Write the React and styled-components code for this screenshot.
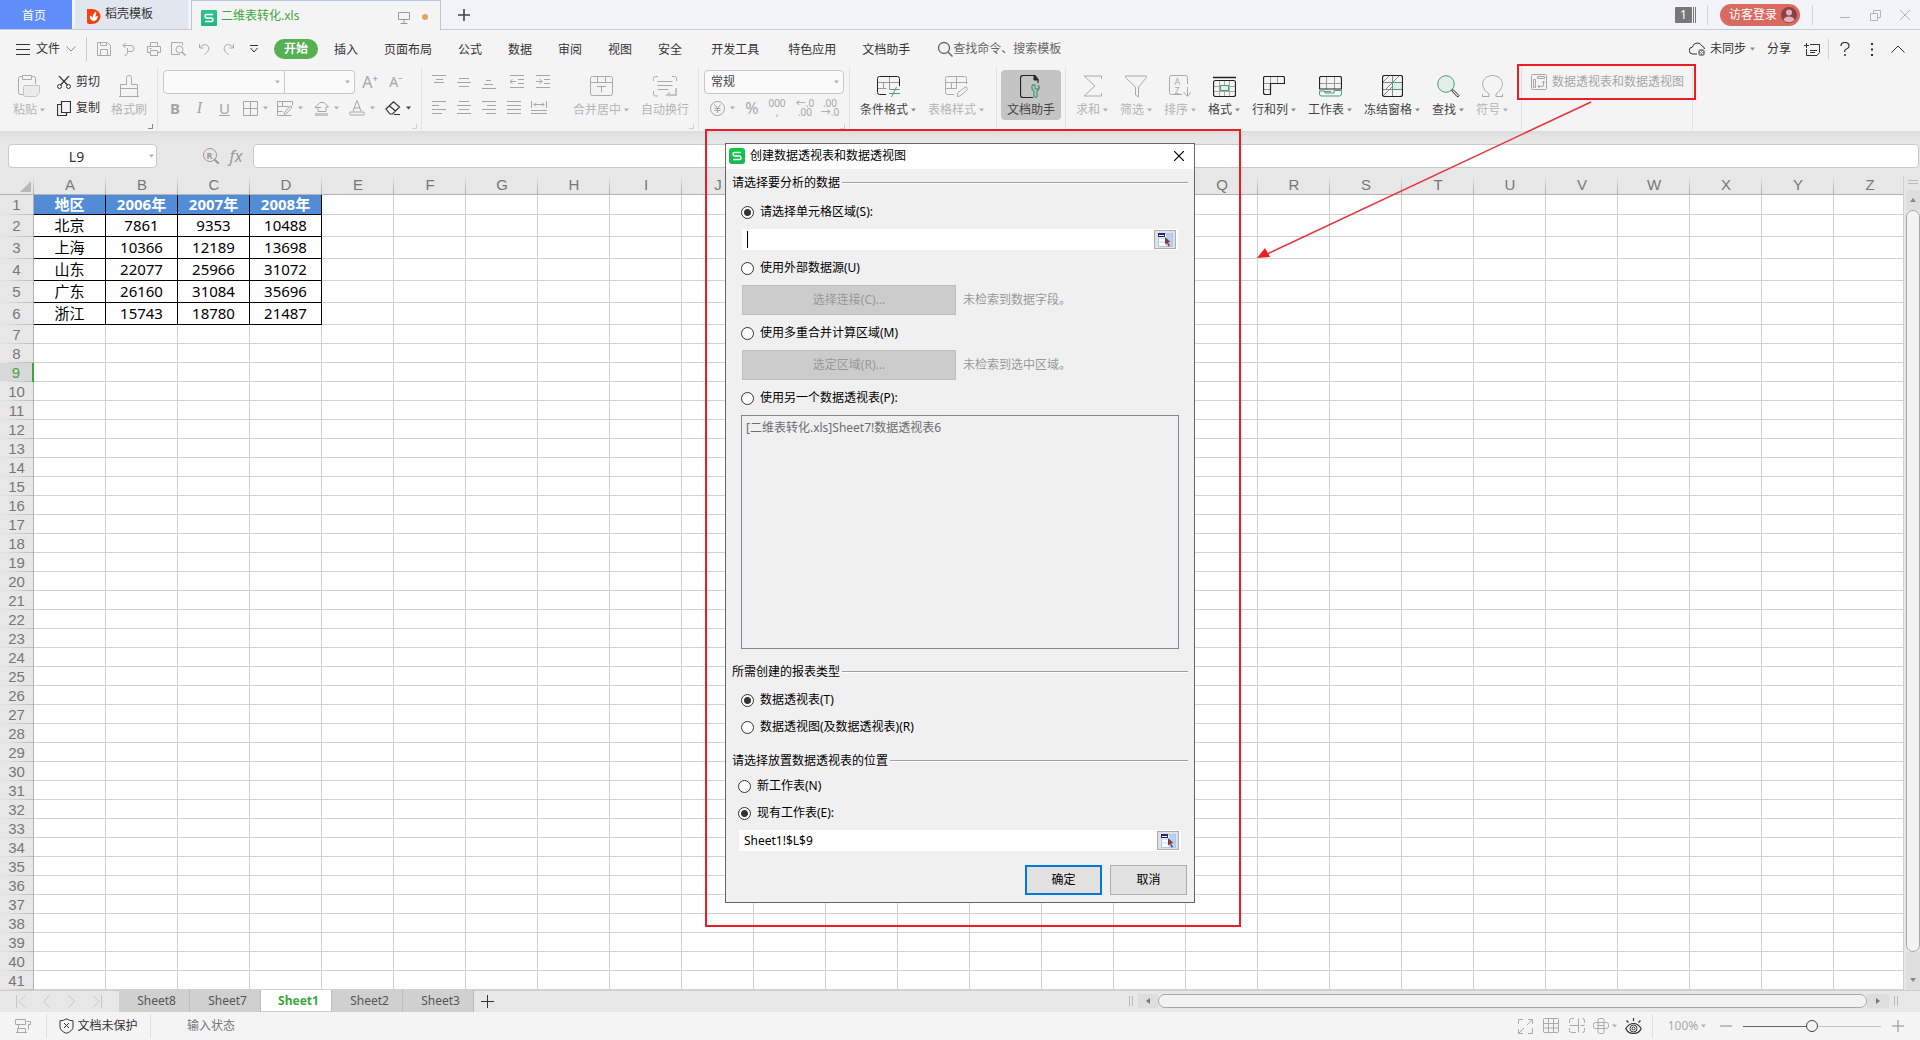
import React, { useState } from "react";
import styled, { createGlobalStyle, css } from "styled-components";

const FONT = `"Noto Sans", "Noto Sans CJK SC", sans-serif`;

const GlobalStyle = createGlobalStyle`
  *, *::after { box-sizing: border-box; }
  body { margin: 0; background: #f4f4f4; }
  button, input, select { font: inherit; color: inherit; margin: 0; }
  button { border: 0; padding: 0; background: none; white-space: nowrap; }
`;

/* ---------- icons ---------- */

const Svg = styled.svg`
  display: block;
  flex: none;
  fill: none;
  stroke: currentColor;
  stroke-width: 1;
`;

const Icon = ({ w = 16, h = w, children, ...rest }) => (
  <Svg width={w} height={h} viewBox={`0 0 ${w} ${h}`} aria-hidden="true" {...rest}>
    {children}
  </Svg>
);

const P = ({ d, ...rest }) => <path d={d} {...rest} />;

const GREEN = "#4f9d74";

const Caret = ({ color = "#aaa" }) => (
  <Icon w={5} h={4}>
    <P d="M0 0.5h5L2.5 3.5z" fill={color} stroke="none" />
  </Icon>
);

const SheetLogo = ({ flat }) => (
  <Icon w={16}>
    <defs>
      <linearGradient id={flat ? "lg1" : "lg2"} x1="0" y1="0" x2="0" y2="1">
        <stop offset="0" stopColor={flat ? "#2fc48f" : "#07cf3c"} />
        <stop offset="1" stopColor={flat ? "#1fb77f" : "#1fb453"} />
      </linearGradient>
    </defs>
    <rect width="16" height="16" rx={flat ? 1 : 3} fill={`url(#${flat ? "lg1" : "lg2"})`} stroke="none" />
    <P d="M12 4.500H5.500Q4 4.500 4 6T5.500 8h5Q12 8 12 9.800T10.500 11.500H4" stroke="#fff" strokeWidth="1.500" />
  </Icon>
);

const ICONS = {
  template: (
    <Icon w={14} h={16}>
      <P d="M0 1h5a8.500 7.500 0 0 1 0 15H2a2 2 0 0 1-2-2z" fill="#f6400d" stroke="none" />
      <P d="M6 13C3 11.500 2.500 9.500 3 7.500c1.500.3 2.500 1.500 2.700 3C5.500 7.500 6.500 5 9 3.500c.5 2 0 4-.8 5.500.8-.9 1.800-1.200 2.600-1C10.800 11 9 13 6 13z" fill="#fff" stroke="none" />
    </Icon>
  ),
  monitor: <Icon w={12} h={12}><P d="M.5.5h11v7H.5zM6 7.500v4M2.500 11.500h7" stroke="#999" /></Icon>,
  burger: <Icon w={14} h={11}><P d="M0 .5h14M0 5.500h14M0 10.500h14" /></Icon>,
  chevron: <Icon w={10} h={6}><P d="M.5.5l4.500 4.500L9.500.5" stroke="#888" /></Icon>,
  save: <Icon w={14}><P d="M.5.5h10l3 3v10H.5zM3.500 13.500v-6h7v6M3.500.5v3h6v-3" /></Icon>,
  pdf: <Icon w={14}><P d="M1 3.500h8a3 3 0 0 1 0 6H5.500M3.500 1L1 3.500 3.500 6M5.500 6v4.500q0 3-3 3" /></Icon>,
  print: <Icon w={14}><P d="M3.500 4V.5h7V4M3.500 10.500h-3V4.500h13v6h-3M3.500 8.500h7v5h-7zM2.500 6.500h2" /></Icon>,
  preview: <Icon w={15} h={14}><P d="M9 12.500H.5V.5h11v3" /><circle cx="8.500" cy="7.500" r="3.500" /><P d="M11 10l3.500 3.500" strokeWidth="1.500" /></Icon>,
  undo: <Icon w={12}><P d="M1.500 1v4h4M1.500 5C4 1.500 8 .5 10 3s.5 5.500-3.500 8.500" /></Icon>,
  redo: <Icon w={12}><P d="M10.500 1v4h-4M10.500 5C8 1.500 4 .5 2 3s-.5 5.500 3.500 8.500" /></Icon>,
  more: <Icon w={8} h={8}><P d="M0 .5h8M.5 3l3.500 4 3.500-4" stroke="#333" /></Icon>,
  search: <Icon w={16}><circle cx="7" cy="7" r="5.500" strokeWidth="1.300" /><P d="M11 11l4.500 4.500" strokeWidth="1.500" /></Icon>,
  cloud: (
    <Icon w={17} h={14}>
      <P d="M8 12H4A3.500 3.500 0 0 1 3.500 5 5 5 0 0 1 13 4q2.500 1 2.500 3" />
      <circle cx="12.500" cy="10.500" r="3.500" fill="#888" stroke="none" />
      <P d="M11 9l3 3M14 9l-3 3" stroke="#fff" />
    </Icon>
  ),
  note: <Icon w={16} h={14}><P d="M6 2.500h9.500v8l-2.500 3H2.500V7M0 3.500h5M2.500 1v5M6 8.500h7M6 10.500h5" /></Icon>,
  help: <Icon w={10} h={14}><P d="M1 4q0-3.500 4-3.500T9 4q0 2-2.500 3T5 10" strokeWidth="1.200" /><P d="M5 12v2" strokeWidth="1.500" /></Icon>,
  dots: <Icon w={4} h={13}><P d="M1 1h2M1 6.500h2M1 12h2" strokeWidth="2" /></Icon>,
  up: <Icon w={14} h={8}><P d="M.5 7.500L7 1l6.500 6.500" /></Icon>,
  paste: <Icon w={22}><P d="M5 19.500H2.500q-2 0-2-2v-14q0-2 2-2H4M14 1.500h1.500q2 0 2 2V9" /><P d="M4.500.5h9v4h-9z" /><P d="M7.500 10.500h14v7l-3.500 4H7.500q-2 0-2-2v-7q0-2 2-2z" fill="#ebebeb" stroke="#c4c4c4" /></Icon>,
  cut: <Icon w={14} h={13}><P d="M2 0l8.500 9M12 0L3.500 9" strokeWidth="1.200" /><circle cx="2.500" cy="10.500" r="2" /><circle cx="11.500" cy="10.500" r="2" /></Icon>,
  copy: <Icon w={14} h={15}><P d="M4.500.5h9v11h-9zM4 3.500H.5v11h9V12" strokeWidth="1.200" /></Icon>,
  brush: <Icon w={20} h={22}><P d="M7.500 9.500v-7q0-2 2.500-2t2.500 2v7h6v12M1.500 21.500v-12h6M1.500 13.500h17M0 21.500h20" /></Icon>,
  border: <Icon w={15}><P d="M.5.500h14v14H.5zM7.500.5v14M.5 7.500h14" /></Icon>,
  cellstyle: <Icon w={16} h={15}><P d="M.5.5h15v4M.5.5v14h14M.5 5.500h11M5.500.5v5M.5 10.500h5M7 12l6-7 2 1-6 7H7z" /></Icon>,
  fill: <Icon w={15}><P d="M1 6.500L6 1.500h4l4.500 4.500H12v4.500H4V6.500zM4 6.500h3" /><P d="M1 13.500h13" stroke="#c6c6c6" strokeWidth="3" /></Icon>,
  fontcolor: <Icon w={16}><P d="M4 11L8 .5l4 10.500M5 8h6" /><rect x=".5" y="12" width="15" height="3" rx="1.500" /></Icon>,
  eraser: <Icon w={16} h={14}><P d="M1 8L8.500 .800 14.500 6 7.500 13H5zM4.500 5l6 5M9 13.500h6" strokeWidth="1.200" /></Icon>,
  merge: <Icon w={23} h={20}><rect x=".5" y=".5" width="22" height="19" rx="2" /><P d="M.5 6.500h22M7.500.5v6M15.500.5v6M7 10.500h9M11.500 10.500v6" /></Icon>,
  wrap: <Icon w={24} h={21}><P d="M.5 5V2.500q0-2 2-2H5M19 .5h2.500q2 0 2 2V5M.5 15v3q0 2 2 2H5M4.500 5.500h15M4.500 9.500h15M4.500 13.500h11" /><P d="M23 12v7h-7" strokeWidth="2" stroke="#c4c4c4" /><P d="M12 19.500l5-4v5z" fill="#c4c4c4" stroke="none" /></Icon>,
  yen: <Icon w={15}><circle cx="7.500" cy="7.500" r="7" /><P d="M4.500 3.500l3 4 3-4M7.500 7.500v4.500M4.500 7.500h6M4.500 9.500h6" /></Icon>,
  cond: <Icon w={23} h={21}><P d="M.5 6.500h22M12.500 1v12M.5 12.500h9M6.500 6v6" stroke="#999" /><P d="M9 18.500H2.500q-2 0-2-2v-14q0-2 2-2h18q2 0 2 2V10" /><P d="M12 17.500h11M12.500 13.500h10M19.500 11l-5 10" stroke={GREEN} /></Icon>,
  tablestyle: <Icon w={23} h={21}><P d="M.5 6.500h22M11.500 1v12M.5 12.500h11M6.500 6v6" /><P d="M9 18.500H2.500q-2 0-2-2v-14q0-2 2-2h17q2 0 2 2V8M12 20.500l1-4 8-6 1.500 3-7.500 6.500z" /></Icon>,
  helper: <Icon w={22} h={23}><P d="M13 22.500H3q-2.500 0-2.500-2.500V3Q.5.500 3 .500h12l3 4V8" strokeWidth="1.200" /><P d="M14 .5v4.500h4" fill="#222" /><P d="M12.500 10q-2 4 1.500 6v5.500q1.500 1.500 3 0V16q3.500-2 1.500-6v4h-2.500l-1-1v-3z" stroke={GREEN} strokeWidth="1.300" /></Icon>,
  sum: <Icon w={19} h={22}><P d="M18.500 4V1H1l11 10L1 21h17.500v-3" /></Icon>,
  filter: <Icon w={22} h={23}><P d="M.5 1h21v1.500L13.500 12v10l-3-2v-8L.5 2.500z" /></Icon>,
  sort: (
    <Icon w={22} h={22}>
      <P d="M18.500 9V2.500q0-2-2-2h-14q-2 0-2 2v15q0 2 2 2H13M18.500 12v9M14.500 17l4 4.500 3.500-4.500" />
      <text x="5.500" y="10" fontSize="9" fontFamily={FONT} fill="currentColor" stroke="none">A</text>
      <text x="5.500" y="19" fontSize="9" fontFamily={FONT} fill="currentColor" stroke="none">Z</text>
    </Icon>
  ),
  format: <Icon w={23} h={21}><P d="M0 1.500h23" strokeWidth="1.500" /><P d="M1 10.500h21M1 15.500h21M6.500 5v15M16.500 5v15M11.500 5v15" stroke="#aaa" /><rect x=".5" y="4.500" width="22" height="16" rx="2" strokeWidth="1.200" /><rect x="7.500" y="9.500" width="8" height="5" fill="#e3eee8" stroke={GREEN} /></Icon>,
  rows: <Icon w={22} h={20}><P d="M1 7.500h6M1 13.500h6M7.500 1v6M14.500 1v6" stroke="#999" /><P d="M2 .5h18q1.500 0 1.500 1.500v5.500h-14v11h-5q-2 0-2-2V2q0-1.500 1.500-1.500z" strokeWidth="1.200" /></Icon>,
  sheet: <Icon w={23} h={21}><P d="M1 7.500h21M7.500 1v12M15.500 1v12" stroke="#999" /><P d="M.5 13V2.500q0-2 2-2h18q2 0 2 2V13z" strokeWidth="1.200" /><P d="M.5 15v3q0 2 2 2h18q2 0 2-2v-3.500H15v2.500H6V15zM6 15.500h6" stroke={GREEN} /></Icon>,
  freeze: <Icon w={21} h={22}><P d="M1 7.500h19M1 14.500h19M10.500 1v20M1 7L7 1M4 14L17 1M1 21l9-9" stroke="#888" /><rect x="10.500" y="7.500" width="10" height="7" fill="#e3eee8" stroke={GREEN} /><rect x=".5" y=".5" width="20" height="21" rx="2" strokeWidth="1.200" /></Icon>,
  find: <Icon w={23} h={23}><circle cx="9" cy="9" r="8.300" fill="#e3eee8" stroke={GREEN} /><P d="M14.500 15.500l5.500 6q1.500.8 2-1l-6-6z" /></Icon>,
  omega: <Icon w={21} h={22}><P d="M0 21.500h7v-2.500C-5 10 2 .5 10.500.5S26 10 14 19v2.500h7M.5 19v2.500M20.500 19v2.500" /></Icon>,
  pivot: <Icon w={16}><rect x=".5" y=".5" width="15" height="15" rx="1" /><P d="M6.500 2.500h7v2h-7zM2.500 5.500h2v8h-2zM7 12.500h4q1.500 0 1.500-1.500V7M8.500 11l-1.500 1.500 1.500 1.500M11 8.500l1.500-1.500L14 8.500" /></Icon>,
  magnify: <Icon w={16}><circle cx="7" cy="7" r="6.500" /><P d="M11 11l5 5" strokeWidth="2" /><text x="3.500" y="10.500" fontSize="9" fontWeight="bold" fontFamily={FONT} fill="currentColor" stroke="none">R</text></Icon>,
  first: <Icon w={10} h={13}><P d="M.5 0v13M9 .5l-6 6 6 6" /></Icon>,
  prev: <Icon w={7} h={13}><P d="M6.500.5l-6 6 6 6" /></Icon>,
  next: <Icon w={7} h={13}><P d="M.5.5l6 6-6 6" /></Icon>,
  last: <Icon w={10} h={13}><P d="M9.500 0v13M1 .5l6 6-6 6" /></Icon>,
  plus: <Icon w={13}><P d="M6.500 0v13M0 6.500h13" /></Icon>,
  macro: <Icon w={16}><P d="M.5 1.500h10v5H.5zM3.500 6.500v4M11.500 3.500h4v3h-2v5M2.500 10.500h8v4h-8v-4M1 14.500h11" /></Icon>,
  shield: <Icon w={15} h={16}><P d="M7.500.8q3 2 6.500 2v6q0 4-6.500 6.500Q1 13 1 8.800v-6q3.500 0 6.500-2zM5 5l5 5M10 5l-5 5" /></Icon>,
  full: <Icon w={15}><P d="M.5 5V.5H5M14.500 9v5.500H10M10 .5h4.500V5M14 1L9 6M.5 10v4.500H5M1 14l5-5" /></Icon>,
  gridview: <Icon w={16}><rect x=".5" y=".5" width="15" height="14" rx="1" /><P d="M.5 5.500h15M.5 10h15M5.500.5v14M10.500.5v14" /></Icon>,
  pageview: <Icon w={16}><P d="M5 .5H2.500q-2 0-2 2V5M.5 7.500h9M9.500.5v14M15.500 5V2.500q0-2-2-2M11.500 7.500h4M15.500 10v2.500q0 2-2 2M.5 10v2.500q0 2 2 2H7" /></Icon>,
  layout: <Icon w={16}><rect x="5" y=".5" width="6" height="15" rx="1.500" /><rect x=".5" y="4.500" width="15" height="6" rx="2" /><P d="M5 7.500h6" /></Icon>,
  eye: <Icon w={17} h={16}><P d="M.8 10.500Q4 5.500 8.500 5.500t7.700 5Q14 15.500 8.500 15.500T.8 10.500zM8.500 0v3M1.500 2.500l2 2M15.500 2.500l-2 2" strokeWidth="1.200" /><circle cx="8.500" cy="10.500" r="3.500" /><circle cx="8.500" cy="10.500" r="1.500" /></Icon>,
  picker: (
    <Icon w={15} h={14}>
      <rect x=".5" y=".5" width="14" height="13" fill="#fff" stroke="#a9c8f5" />
      <P d="M8 1h6v12H8z" fill="#b7cff5" stroke="none" />
      <P d="M0 5h14M0 9h14" stroke="#b9d3f8" />
      <rect x=".5" y=".5" width="6" height="3" fill="#fff" stroke="#26266e" />
      <P d="M0 1h7" stroke="#26268a" strokeWidth="2" />
      <P d="M7 4l5.500 5-2.500.3 2 3.700-1.500.5-1.500-3.500-2 1.500z" fill="#7a4038" stroke="none" />
    </Icon>
  ),
};

/* line icons of the alignment block: [x, y, width] per stroke */
const Lines = ({ rows, w = 14, h = 14, children }) => (
  <Icon w={w} h={h}>
    {rows.map(([x, y, len], i) => <P key={i} d={`M${x} ${y}.5h${len}`} />)}
    {children}
  </Icon>
);

/* ---------- title bar ---------- */

const Page = styled.div`
  min-width: 1280px;
  height: 100vh;
  display: flex;
  flex-direction: column;
  overflow: hidden;
  position: relative;
  background: #f4f4f4;
  color: #333;
  font: 12px/16px ${FONT};
`;

const TitleBar = styled.header`
  display: flex;
  height: 30px;
  background: #f1f3f9;
  box-shadow: inset 0 -1px #c3cbe0;
`;

const DocTab = styled.button`
  display: flex;
  align-items: center;
  gap: 4px;
  height: 30px;
  width: ${(p) => p.$w}px;
  padding: 0 0 2px 12px;
  border-bottom: 1px solid #c3cbe0;
  background: #e2e6ef;
  margin-right: 3px;
  > svg { margin-top: 4px; }
  ${(p) => p.$home && css`
    padding: 2px 4px 0 0;
    justify-content: center;
    height: 29px;
    border: 0;
    background: #5f8dfa;
    color: #fff;
  `}
  ${(p) => p.$active && css`
    padding: 0 12px 0 9px;
    margin-right: 0;
    background: #f4f4f4;
    color: #3ca83c;
    border: 1px solid #bcc5dd;
    border-bottom: 0;
  `}
`;

const Spacer = styled.div`flex: 1;`;

const Dot = styled.span`
  width: 6px;
  height: 6px;
  border-radius: 3px;
  background: #e8a05a;
  margin: 3px 0 0 8px;
`;

const AddTab = styled.button`
  width: 46px;
  display: flex;
  align-items: center;
  justify-content: center;
  color: #444;
`;

const WindowTools = styled.div`
  display: flex;
  align-items: center;
`;

const Counter = styled.span`
  display: flex;
  align-items: center;
  gap: 1px;
  margin-right: 11px;
  b {
    width: 17px;
    background: #777;
    color: #fff;
    text-align: center;
    border-radius: 1px;
    font-weight: normal;
  }
  i {
    width: 1px;
    height: 16px;
    background: #777;
  }
`;

const Divider = styled.span`
  flex: none;
  width: 1px;
  height: ${(p) => p.$h || 20}px;
  margin: 0 ${(p) => p.$m || 0}px;
  background: ${(p) => p.$color || "#d0d0d0"};
`;

const Login = styled.button`
  display: flex;
  align-items: center;
  gap: 4px;
  height: 22px;
  width: 80px;
  margin-left: 12px;
  padding: 0 0 1px 9px;
  border-radius: 11px;
  background: #d96a5f;
  color: #fff;
`;

const WinButtons = styled.div`
  display: flex;
  margin-left: 5px;
`;

const WinButton = styled.button`
  width: 30px;
  height: 28px;
  display: flex;
  align-items: center;
  justify-content: center;
  color: #b2b4ba;
`;

/* ---------- menu row ---------- */

const MenuRow = styled.nav`
  display: flex;
  align-items: center;
  height: 38px;
  padding: 0 15px 0 16px;
  white-space: nowrap;
`;

const FileButton = styled.button`
  display: flex;
  align-items: center;
  gap: 6px;
  width: 70px;
`;

const QuickTools = styled.div`
  display: flex;
  align-items: center;
  padding: 0 8px 0 4px;
  color: #aaa;
`;

const QuickButton = styled.button`
  width: 25px;
  height: 20px;
  display: flex;
  align-items: center;
  justify-content: center;
`;

const MenuTab = styled.button`
  height: 20px;
  padding: 2px 13px 0;
  margin: 0 ${(p) => (p.$wide ? 3 : 0)}px;
  ${(p) => p.$active && css`
    padding: 0 10px;
    margin-right: 3px;
    border-radius: 10px;
    background: #55b054;
    color: #fff;
    font-weight: bold;
  `}
`;

const SearchBox = styled.button`
  display: flex;
  align-items: center;
  margin-left: 14px;
  color: #666;
`;

const Action = styled.button`
  display: flex;
  align-items: center;
  justify-content: center;
  gap: 4px;
  height: 20px;
  margin-left: ${(p) => p.$ml || 0}px;
`;

/* ---------- ribbon ---------- */

const Ribbon = styled.div`
  display: flex;
  height: 64px;
  border-bottom: 1px solid #ddd;
  white-space: nowrap;
  color: #444;
`;

const Group = styled.div`
  position: relative;
  flex: none;
  display: flex;
  width: ${(p) => p.$w}px;
  height: 62px;
  padding: 2px 0 10px ${(p) => p.$pl || 0}px;
  border-right: 1px solid #e2e2e2;
`;

const Launcher = styled.i`
  position: absolute;
  right: 4px;
  bottom: 1px;
  width: 5px;
  height: 5px;
  border: solid ${(p) => (p.$dark ? "#888" : "#d0d0d0")};
  border-width: 0 1px 1px 0;
`;

const BigTool = styled.button`
  display: flex;
  flex-direction: column;
  align-items: center;
  height: 50px;
  padding: 0 6px;
  margin-left: ${(p) => p.$ml || 0}px;
  border-radius: 4px;
  color: ${(p) => (p.disabled ? "#aaa" : "#222")};
  background: ${(p) => (p.$on ? "#c4c4c4" : "none")};
  .art {
    height: 32px;
    display: flex;
    align-items: center;
  }
  .label {
    display: flex;
    align-items: center;
    gap: 3px;
    color: ${(p) => (p.disabled ? "#b5b5b5" : "#444")};
  }
`;

const Tool = ({ icon, label, drop = true, on, ml, disabled }) => (
  <BigTool disabled={disabled} $on={on} $ml={ml}>
    <span className="art">{ICONS[icon]}</span>
    <span className="label">
      {label}
      {drop && <Caret color={disabled ? "#b0b0b0" : "#888"} />}
    </span>
  </BigTool>
);

const Rows = styled.div`
  display: flex;
  flex-direction: column;
  gap: 2px;
  margin-left: ${(p) => p.$ml || 0}px;
`;

const Line = styled.div`
  display: flex;
  align-items: center;
  height: 24px;
`;

const SmallTool = styled.button`
  display: flex;
  align-items: center;
  justify-content: ${(p) => (p.$left ? "flex-start" : "center")};
  gap: 5px;
  flex: none;
  height: 24px;
  width: ${(p) => p.$w || 25}px;
  color: ${(p) => (p.$dark ? "#333" : "#a6a6a6")};
`;

const Glyph = styled.span`
  font: ${(p) => p.$f || `16px/20px ${FONT}`};
`;

const Stacked = styled.span`
  font: 10px/9px ${FONT};
  text-align: center;
  white-space: pre;
`;

const Combo = styled.span`
  display: grid;
  align-items: center;
  height: 24px;
  width: ${(p) => p.$w}px;
  border: 1px solid #c8c8c8;
  border-radius: ${(p) => p.$r || "4px"};
  border-left-width: ${(p) => (p.$joined ? 0 : 1)}px;
  background: #fafafa;
  > * { grid-area: 1 / 1; }
  > svg { justify-self: end; margin-right: 4px; }
  select {
    appearance: none;
    height: 22px;
    padding: 0 6px;
    border: 0;
    background: none;
    outline: 0;
  }
`;

const Highlight = styled.div`
  position: absolute;
  pointer-events: none;
  border: 2px solid #ec1c24;
  inset: ${(p) => p.$inset};
`;

const Pointer = styled.svg`
  position: absolute;
  z-index: 5;
  left: -265px;
  top: 33px;
  pointer-events: none;
`;

/* ---------- formula bar and grid ---------- */

const FormulaBar = styled.div`
  display: flex;
  align-items: center;
  height: 44px;
  padding: 4px 1px 0 8px;
  background: linear-gradient(#dedede, #e7e7e7 6px);
  color: #999;
`;

const NameBox = styled.span`
  flex: none;
  display: grid;
  align-items: center;
  width: 149px;
  margin-right: 46px;
  > * { grid-area: 1 / 1; }
  > svg { justify-self: end; margin-right: 3px; }
`;

const BarInput = styled.input`
  width: 100%;
  min-width: 0;
  height: 24px;
  padding: 0 12px 0 0;
  border: 1px solid #c9c9c9;
  border-radius: 4px;
  background: #fff;
  color: #333;
  text-align: center;
  font-size: 14px;
  outline: 0;
`;

const Fx = styled.span`
  flex: none;
  width: 34px;
  text-align: center;
  font: italic 16px/20px ${FONT};
`;

const SheetArea = styled.main`
  flex: 1;
  min-height: 0;
  display: flex;
  background: #e6e6e6;
`;

const GridClip = styled.div`
  flex: 1;
  min-width: 0;
  overflow: hidden;
  background: #fff;
  border-right: 1px solid #d0d0d0;
`;

const Grid = styled.table`
  table-layout: fixed;
  width: 1906px;
  border-collapse: separate;
  border-spacing: 0;
  font: 15px/16px ${FONT};
  color: #000;
  th, td { padding: 0; text-align: center; overflow: hidden; white-space: nowrap; }
  td { padding-bottom: 2px; }
`;

const ColHead = styled.th`
  height: 19px;
  background:
    linear-gradient(#e7e7e7, #aaa) right / 1px 100% no-repeat, #e7e7e7;
  border-bottom: 1px solid #b2b2b2;
  font: 15px/16px "Liberation Sans", sans-serif;
  color: #777;
`;

const Corner = styled(ColHead)`
  width: 34px;
  > svg { margin: 3px 3px 0 auto; }
`;

const RowHead = styled.th`
  height: ${(p) => p.$h}px;
  font: 15px/16px "Liberation Sans", sans-serif;
  color: ${(p) => (p.$active ? "#3ca83c" : "#777")};
  background:
    linear-gradient(90deg, #e7e7e7, #bbb) bottom / 100% 1px no-repeat,
    ${(p) => (p.$active ? "#d8d8d8" : "#e7e7e7")};
  border-right: ${(p) => (p.$active ? "2px solid #3ca83c" : "1px solid #b2b2b2")};
`;

const Cell = styled.td`
  border: solid ${(p) => (p.$filled ? "#000" : "#d2d2d2")};
  border-width: 0 1px 1px 0;
  ${(p) => p.$head && css`
    background: #528cd7;
    color: #fff;
    font-weight: bold;
  `}
`;

const VScroll = styled.div`
  width: 16px;
  padding: 0 0 0 2px;
  display: flex;
  flex-direction: column;
  align-items: stretch;
`;

const ScrollArrow = styled.button`
  display: flex;
  align-items: center;
  justify-content: center;
  height: ${(p) => p.$h || 14}px;
  width: ${(p) => (p.$w ? p.$w + "px" : "auto")};
  background: #dedede;
`;

const Thumb = styled.div`
  flex: 1;
  border: 1px solid #a8a8a8;
  border-radius: 8px;
  background: #f3f3f3;
`;

const SplitMark = styled.i`
  flex: none;
  width: ${(p) => (p.$tall ? 4 : 10)}px;
  height: ${(p) => (p.$tall ? 10 : 4)}px;
  margin: ${(p) => p.$m};
  border: solid #bbb;
  border-width: ${(p) => (p.$tall ? "0 1px" : "1px 0")};
`;

/* ---------- bottom bars ---------- */

const SheetBar = styled.div`
  display: flex;
  align-items: center;
  height: 22px;
  background: #e7e7e7;
  box-shadow: inset 0 1px #cfcfcf;
`;

const SheetNav = styled.div`
  display: flex;
  justify-content: space-between;
  width: 119px;
  padding: 0 17px 0 16px;
  color: #c6c6c6;
`;

const SheetTab = styled.button`
  width: 71px;
  height: 22px;
  padding-left: 5px;
  border-right: 1px solid #bcbcbc;
  background: #d0d0d0;
  color: #555;
  ${(p) => p.$active && css`
    background: #fff;
    border-bottom: 1px solid #ccc;
    color: #3ca83c;
    font-weight: bold;
  `}
`;

const HScroll = styled.div`
  flex: none;
  display: flex;
  align-items: center;
  width: calc(41% + 4px);
  height: 14px;
  ${Thumb} { height: 14px; }
`;

const StatusBar = styled.footer`
  display: flex;
  align-items: center;
  height: 28px;
  padding: 0 16px 0 12px;
  background: #f4f4f4;
  color: #777;
`;

const StatusTool = styled.button`
  flex: none;
  display: flex;
  align-items: center;
  justify-content: center;
  gap: 3px;
  width: ${(p) => p.$w || 26}px;
  color: ${(p) => (p.$dark ? "#333" : "#aaa")};
`;

const Zoom = styled.input`
  appearance: none;
  width: 138px;
  height: 14px;
  margin: 0 11px 0 6px;
  background: linear-gradient(90deg, #666 50%, #c4c4c4 50%) center / 100% 1px no-repeat;
  &::-webkit-slider-thumb {
    appearance: none;
    width: 12px;
    height: 12px;
    border: 1px solid #444;
    border-radius: 6px;
    background: #f4f4f4;
  }
`;

/* ---------- dialog ---------- */

const DialogLayer = styled.div`
  position: absolute;
  inset: 143px 0 auto;
  display: flex;
  justify-content: center;
  pointer-events: none;
`;

const Dialog = styled.section`
  position: relative;
  width: 470px;
  border: 1px solid #666;
  background: #f0f0f0;
  color: #000;
  pointer-events: auto;
`;

const DialogTitle = styled.header`
  display: flex;
  align-items: center;
  gap: 5px;
  height: 25px;
  padding: 0 10px 1px 3px;
  background: #fff;
`;

const CloseButton = styled.button`
  margin-left: auto;
`;

const DialogBody = styled.form`
  padding: 6px 6px 7px;
`;

const Legend = styled.div`
  display: flex;
  align-items: center;
  gap: 2px;
  margin-top: ${(p) => p.$mt || 0}px;
  &::after {
    content: "";
    flex: 1;
    height: 2px;
    background: #a0a0a0;
    border-bottom: 1px solid #fff;
  }
`;

const Options = styled.div`
  display: flex;
  flex-direction: column;
  gap: ${(p) => p.$gap}px;
  padding: ${(p) => p.$pad};
`;

const Block = styled.div`
  display: flex;
  flex-direction: column;
  gap: 9px;
`;

const RadioLabel = styled.label`
  display: flex;
  align-items: center;
  gap: 6px;
  height: 16px;
  margin-left: -1px;
  input {
    appearance: none;
    width: 13px;
    height: 13px;
    border: 1px solid #333;
    border-radius: 50%;
    background: #fff;
  }
  input:checked {
    background: radial-gradient(circle, #333 3px, #fff 4px);
  }
`;

const RangeBox = styled.div`
  display: flex;
  align-items: center;
  height: 21px;
  padding: 0 2px 0 5px;
  background: #fff;
  input {
    flex: 1;
    height: 19px;
    border: 0;
    padding: 0;
    outline: 0;
    background: none;
  }
`;

const TextCursor = styled.i`
  width: 1px;
  height: 17px;
  background: #000;
`;

const PickButton = styled.button`
  display: flex;
  align-items: center;
  justify-content: center;
  width: 22px;
  height: 19px;
  border: 1px solid #adadad;
  background: #e1e1e1;
`;

const SourceRow = styled.div`
  display: flex;
  align-items: center;
  gap: 7px;
  color: #999;
`;

const SourceButton = styled.button`
  width: 214px;
  height: 30px;
  border: 1px solid #bfbfbf;
  background: #ccc;
  color: #999;
`;

const PivotList = styled.ul`
  list-style: none;
  height: 234px;
  margin: 0 -1px;
  padding: 4px;
  border: 1px solid #828790;
  color: #6d6d6d;
`;

const Buttons = styled.div`
  display: flex;
  justify-content: flex-end;
  gap: 8px;
  padding: 14px 1px 0 0;
`;

const DialogButton = styled.button`
  width: 77px;
  height: 30px;
  background: #e1e1e1;
  border: ${(p) => (p.$primary ? "2px solid #0078d7" : "1px solid #adadad")};
`;

/* ---------- data ---------- */

const MENUS = ["插入", "页面布局", "公式", "数据", "审阅", "视图", "安全", "开发工具", "特色应用", "文档助手"];
const QUICK = ["save", "pdf", "print", "preview", "undo", "redo", "more"];
const COLUMNS = "ABCDEFGHIJKLMNOPQRSTUVWXYZ".split("");
const SHEETS = ["Sheet8", "Sheet7", "Sheet1", "Sheet2", "Sheet3"];

const DATA = [
  ["地区", "2006年", "2007年", "2008年"],
  ["北京", 7861, 9353, 10488],
  ["上海", 10366, 12189, 13698],
  ["山东", 22077, 25966, 31072],
  ["广东", 26160, 31084, 35696],
  ["浙江", 15743, 18780, 21487],
];

const rowHeight = (row) => (row === 0 ? 20 : row < DATA.length ? 22 : 19);

const ALIGN_TOP = [
  [[0, 0, 14], [4, 4, 7], [2, 7, 10]],
  [[2, 3, 10], [0, 7, 14], [2, 11, 10]],
  [[4, 5, 5], [2, 9, 9], [0, 13, 14]],
];

const ALIGN_BOTTOM = [
  [[0, 0, 14], [0, 4, 7], [0, 8, 14], [0, 12, 10]],
  [[2, 0, 10], [0, 4, 14], [2, 8, 10], [0, 12, 14]],
  [[0, 0, 14], [5, 4, 9], [0, 8, 14], [4, 12, 10]],
  [[0, 0, 14], [0, 4, 14], [0, 8, 14], [0, 12, 14]],
];

/* ---------- parts ---------- */

const TopBar = () => (
  <TitleBar>
    <DocTab $home $w={72}>首页</DocTab>
    <DocTab $w={113}>{ICONS.template}稻壳模板</DocTab>
    <DocTab $active $w={250}>
      <SheetLogo flat />
      二维表转化.xls
      <Spacer />
      {ICONS.monitor}
      <Dot />
    </DocTab>
    <AddTab aria-label="新建">
      <Icon w={12}><P d="M6 0v12M0 6h12" strokeWidth="1.600" /></Icon>
    </AddTab>
    <Spacer />
    <WindowTools>
      <Counter><b>1</b><i /><i /></Counter>
      <Divider $color="#cfd3dc" />
      <Login>
        访客登录
        <Icon w={16}>
          <circle cx="8" cy="8" r="8" fill="#8c4047" stroke="none" />
          <circle cx="8" cy="5.500" r="3" fill="#ddb5b5" stroke="none" />
          <P d="M2.500 13q1-3.500 5.500-3.500t5.500 3.500A8 8 0 0 1 2.500 13z" fill="#ddb5b5" stroke="none" />
        </Icon>
      </Login>
      <Divider $color="#cfd3dc" $m={12} />
      <WinButtons>
        <WinButton aria-label="最小化"><Icon w={10}><P d="M0 7.500h10" /></Icon></WinButton>
        <WinButton aria-label="还原"><Icon w={11}><P d="M.5 3.500h7v7h-7zM3.500 3.500v-3h7v7h-3" /></Icon></WinButton>
        <WinButton aria-label="关闭"><Icon w={10}><P d="M0 0l10 10M10 0L0 10" /></Icon></WinButton>
      </WinButtons>
    </WindowTools>
  </TitleBar>
);

const Menus = () => (
  <MenuRow>
    <FileButton>{ICONS.burger}文件{ICONS.chevron}</FileButton>
    <Divider $h={24} $color="#c8c8c8" />
    <QuickTools>
      {QUICK.map((name) => <QuickButton key={name} aria-label={name}>{ICONS[name]}</QuickButton>)}
    </QuickTools>
    <MenuTab $active>开始</MenuTab>
    {MENUS.map((name) => <MenuTab key={name} $wide={name === "开发工具"}>{name}</MenuTab>)}
    <SearchBox>{ICONS.search}查找命令、搜索模板</SearchBox>
    <Spacer />
    <Action>{ICONS.cloud}未同步<Caret color="#888" /></Action>
    <Action $ml={12}>分享</Action>
    <Action $ml={13}>{ICONS.note}</Action>
    <Divider $m={8} />
    <Action $ml={3}>{ICONS.help}</Action>
    <Action $ml={20}>{ICONS.dots}</Action>
    <Action $ml={17}>{ICONS.up}</Action>
  </MenuRow>
);

const Drop = () => <Caret color="#b0b0b0" />;

const Tools = () => (
  <Ribbon>
    <Group $w={158} $pl={7}>
      <Tool icon="paste" label="粘贴" disabled />
      <Rows $ml={6}>
        <SmallTool $dark $left $w={48}>{ICONS.cut}剪切</SmallTool>
        <SmallTool $dark $left $w={48}>{ICONS.copy}复制</SmallTool>
      </Rows>
      <Tool icon="brush" label="格式刷" drop={false} disabled />
      <Launcher $dark />
    </Group>

    <Group $w={264} $pl={5}>
      <Rows>
        <Line>
          <Combo $w={122} $r="4px 0 0 4px"><select aria-label="字体" /><Drop /></Combo>
          <Combo $w={70} $r="0 4px 4px 0" $joined><select aria-label="字号" /><Drop /></Combo>
          <SmallTool $w={30}><Glyph>A⁺</Glyph></SmallTool>
          <SmallTool $w={22}><Glyph $f={`14px/20px ${FONT}`}>A⁻</Glyph></SmallTool>
        </Line>
        <Line>
          <SmallTool $w={24}><Glyph $f={`bold 15px/20px ${FONT}`}>B</Glyph></SmallTool>
          <SmallTool><Glyph $f={`italic 16px/20px "Liberation Serif", serif`}>I</Glyph></SmallTool>
          <SmallTool><Glyph as="u" $f={`15px/20px ${FONT}`}>U</Glyph></SmallTool>
          <SmallTool $w={36}>{ICONS.border}<Drop /></SmallTool>
          <SmallTool $w={34}>{ICONS.cellstyle}<Drop /></SmallTool>
          <SmallTool $w={38}>{ICONS.fill}<Drop /></SmallTool>
          <SmallTool $w={34}>{ICONS.fontcolor}<Drop /></SmallTool>
          <SmallTool $w={38} $dark>{ICONS.eraser}<Caret color="#444" /></SmallTool>
        </Line>
      </Rows>
      <Launcher />
    </Group>

    <Group $w={277} $pl={4}>
      <Rows>
        <Line>
          {ALIGN_TOP.map((rows, i) => <SmallTool key={i}><Lines rows={rows} /></SmallTool>)}
          <SmallTool $w={31}>
            <Lines rows={[[0, 0, 14], [8, 4, 6], [8, 8, 6], [0, 12, 14]]}><P d="M0 6.500h6M2.500 4L0 6.500 2.500 9" /></Lines>
          </SmallTool>
          <SmallTool $w={21}>
            <Lines rows={[[0, 0, 14], [8, 4, 6], [8, 8, 6], [0, 12, 14]]}><P d="M0 6.500h6M3.500 4L6 6.500 3.500 9" /></Lines>
          </SmallTool>
        </Line>
        <Line>
          {ALIGN_BOTTOM.map((rows, i) => <SmallTool key={i}><Lines rows={rows} /></SmallTool>)}
          <SmallTool>
            <Lines w={16} rows={[[0, 9, 16], [0, 12, 16]]}><P d="M.5 0v7M15.500 0v7M3 3.500h10M5 1.500l-2 2 2 2M11 1.500l2 2-2 2" /></Lines>
          </SmallTool>
        </Line>
      </Rows>
      <Tool icon="merge" label="合并居中" ml={14} disabled />
      <Tool icon="wrap" label="自动换行" drop={false} disabled />
      <Launcher />
    </Group>

    <Group $w={151} $pl={5}>
      <Rows>
        <Combo $w={140}>
          <select aria-label="数字格式"><option>常规</option></select>
          <Drop />
        </Combo>
        <Line>
          <SmallTool $w={36}>{ICONS.yen}<Drop /></SmallTool>
          <SmallTool $w={24}><Glyph>%</Glyph></SmallTool>
          <SmallTool $w={26}><Stacked>{"000\n,"}</Stacked></SmallTool>
          <SmallTool $w={30}><Stacked>{"←.0\n.00"}</Stacked></SmallTool>
          <SmallTool $w={20}><Stacked>{".00\n→.0"}</Stacked></SmallTool>
        </Line>
      </Rows>
      <Launcher />
    </Group>

    <Group $w={147} $pl={4}>
      <Tool icon="cond" label="条件格式" />
      <Tool icon="tablestyle" label="表格样式" disabled />
    </Group>

    <Group $w={69} $pl={4}>
      <Tool icon="helper" label="文档助手" drop={false} on />
    </Group>

    <Group $w={456} $pl={4}>
      <Tool icon="sum" label="求和" disabled />
      <Tool icon="filter" label="筛选" disabled />
      <Tool icon="sort" label="排序" disabled />
      <Tool icon="format" label="格式" />
      <Tool icon="rows" label="行和列" />
      <Tool icon="sheet" label="工作表" />
      <Tool icon="freeze" label="冻结窗格" />
      <Tool icon="find" label="查找" />
      <Tool icon="omega" label="符号" disabled />
    </Group>

    <Group $w={171} $pl={9}>
      <SmallTool $left $w={160}>{ICONS.pivot}数据透视表和数据透视图</SmallTool>
      <Highlight $inset="-4px -4px 30px -5px" />
      <Pointer width="336" height="160" viewBox="0 0 336 160" aria-hidden="true">
        <path d="M334 1L8 154" stroke="#e8323a" strokeWidth="1.500" />
        <path d="M0 157l8-10 5 9z" fill="#ec1c24" />
      </Pointer>
    </Group>
  </Ribbon>
);

const Sheet = () => (
  <SheetArea>
    <GridClip>
      <Grid>
        <thead>
          <tr>
            <Corner><Icon w={11}><P d="M11 0v11H0z" fill="#b8b8b8" stroke="none" /></Icon></Corner>
            {COLUMNS.map((c) => <ColHead key={c}>{c}</ColHead>)}
          </tr>
        </thead>
        <tbody>
          {Array.from({ length: 41 }, (_, row) => (
            <tr key={row}>
              <RowHead $h={rowHeight(row)} $active={row === 8}>{row + 1}</RowHead>
              {COLUMNS.map((c, col) => {
                const value = DATA[row]?.[col];
                return (
                  <Cell key={c} $filled={value !== undefined} $head={row === 0 && value !== undefined}>
                    {value}
                  </Cell>
                );
              })}
            </tr>
          ))}
        </tbody>
      </Grid>
    </GridClip>
    <VScroll>
      <SplitMark $m="4px 2px 6px" />
      <ScrollArrow $h={20} aria-label="向上"><Icon w={6} h={4}><P d="M0 4h6L3 0z" fill="#888" stroke="none" /></Icon></ScrollArrow>
      <Thumb />
      <ScrollArrow $h={18} as="div" />
      <ScrollArrow $h={20} aria-label="向下"><Icon w={6} h={4}><P d="M0 0h6L3 4z" fill="#888" stroke="none" /></Icon></ScrollArrow>
    </VScroll>
  </SheetArea>
);

const BottomBars = () => {
  const [sheet, setSheet] = useState("Sheet1");
  const [zoom, setZoom] = useState(100);
  return (
    <>
      <SheetBar>
        <SheetNav>{ICONS.first}{ICONS.prev}{ICONS.next}{ICONS.last}</SheetNav>
        {SHEETS.map((name) => (
          <SheetTab key={name} $active={name === sheet} onClick={() => setSheet(name)}>{name}</SheetTab>
        ))}
        <StatusTool $dark aria-label="新建工作表">{ICONS.plus}</StatusTool>
        <Spacer />
        <HScroll>
          <SplitMark $tall $m="0 5px 0 0" />
          <ScrollArrow $w={20} aria-label="向左"><Icon w={4} h={6}><P d="M4 0v6L0 3z" fill="#777" stroke="none" /></Icon></ScrollArrow>
          <Thumb />
          <ScrollArrow $w={22} aria-label="向右"><Icon w={4} h={6}><P d="M0 0v6l4-3z" fill="#777" stroke="none" /></Icon></ScrollArrow>
          <SplitMark $tall $m="0 22px 0 5px" />
        </HScroll>
      </SheetBar>
      <StatusBar>
        <StatusTool $w={22}>{ICONS.macro}</StatusTool>
        <Divider $h={24} $m={12} $color="#e0e0e0" />
        <StatusTool $dark $w={79}>{ICONS.shield}文档未保护</StatusTool>
        <Divider $h={24} $m={12} $color="#e0e0e0" />
        <Action as="span" $ml={24}>输入状态</Action>
        <Spacer />
        <StatusTool>{ICONS.full}</StatusTool>
        <StatusTool>{ICONS.gridview}</StatusTool>
        <StatusTool>{ICONS.pageview}</StatusTool>
        <StatusTool $w={30}>{ICONS.layout}<Drop /></StatusTool>
        <StatusTool $dark>{ICONS.eye}</StatusTool>
        <Divider $h={24} $m={6} $color="#e0e0e0" />
        <StatusTool $w={56}>{zoom}%<Drop /></StatusTool>
        <StatusTool $w={22}><Icon w={12}><P d="M0 6h12" strokeWidth="1.500" /></Icon></StatusTool>
        <Zoom type="range" aria-label="缩放" min="0" max="200" value={zoom} onChange={(e) => setZoom(e.target.value)} />
        <StatusTool $w={12}><Icon w={12}><P d="M0 6h12M6 0v12" strokeWidth="1.500" /></Icon></StatusTool>
      </StatusBar>
    </>
  );
};

const Radio = ({ name, value, current, onPick, children }) => (
  <RadioLabel>
    <input type="radio" name={name} checked={current === value} onChange={() => onPick(value)} />
    {children}
  </RadioLabel>
);

const PivotDialog = () => {
  const [source, setSource] = useState("range");
  const [kind, setKind] = useState("table");
  const [place, setPlace] = useState("existing");
  const [range, setRange] = useState("");
  const [target, setTarget] = useState("Sheet1!$L$9");
  const src = { name: "source", current: source, onPick: setSource };
  const knd = { name: "kind", current: kind, onPick: setKind };
  const plc = { name: "place", current: place, onPick: setPlace };

  return (
    <Dialog role="dialog" aria-label="创建数据透视表和数据透视图">
      <DialogTitle>
        <SheetLogo />
        创建数据透视表和数据透视图
        <CloseButton aria-label="关闭"><Icon w={10}><P d="M0 0l10 10M10 0L0 10" strokeWidth="1.200" /></Icon></CloseButton>
      </DialogTitle>
      <DialogBody onSubmit={(e) => e.preventDefault()}>
        <Legend>请选择要分析的数据</Legend>
        <Options $gap={10} $pad="13px 10px 0">
          <Block>
            <Radio value="range" {...src}>请选择单元格区域(S):</Radio>
            <RangeBox>
              <TextCursor />
              <input aria-label="单元格区域" value={range} onChange={(e) => setRange(e.target.value)} />
              <PickButton aria-label="选取">{ICONS.picker}</PickButton>
            </RangeBox>
          </Block>
          <Block>
            <Radio value="external" {...src}>使用外部数据源(U)</Radio>
            <SourceRow><SourceButton disabled>选择连接(C)...</SourceButton>未检索到数据字段。</SourceRow>
          </Block>
          <Block>
            <Radio value="multi" {...src}>使用多重合并计算区域(M)</Radio>
            <SourceRow><SourceButton disabled>选定区域(R)...</SourceButton>未检索到选中区域。</SourceRow>
          </Block>
          <Block>
            <Radio value="pivot" {...src}>使用另一个数据透视表(P):</Radio>
            <PivotList><li>[二维表转化.xls]Sheet7!数据透视表6</li></PivotList>
          </Block>
        </Options>

        <Legend $mt={15}>所需创建的报表类型</Legend>
        <Options $gap={11} $pad="12px 10px 0">
          <Radio value="table" {...knd}>数据透视表(T)</Radio>
          <Radio value="chart" {...knd}>数据透视图(及数据透视表)(R)</Radio>
        </Options>

        <Legend $mt={18}>请选择放置数据透视表的位置</Legend>
        <Options $gap={11} $pad="9px 7px 0">
          <Radio value="new" {...plc}>新工作表(N)</Radio>
          <Block>
            <Radio value="existing" {...plc}>现有工作表(E):</Radio>
            <RangeBox>
              <input aria-label="放置位置" value={target} onChange={(e) => setTarget(e.target.value)} />
              <PickButton aria-label="选取">{ICONS.picker}</PickButton>
            </RangeBox>
          </Block>
        </Options>
        <Buttons>
          <DialogButton $primary>确定</DialogButton>
          <DialogButton>取消</DialogButton>
        </Buttons>
      </DialogBody>
      <Highlight $inset="-15px -47px -25px -21px" />
    </Dialog>
  );
};

export default function App() {
  return (
    <Page>
      <GlobalStyle />
      <TopBar />
      <Menus />
      <Tools />
      <FormulaBar>
        <NameBox>
          <BarInput aria-label="名称框" defaultValue="L9" />
          <Caret />
        </NameBox>
        {ICONS.magnify}
        <Fx>fx</Fx>
        <BarInput aria-label="编辑栏" />
      </FormulaBar>
      <Sheet />
      <BottomBars />
      <DialogLayer><PivotDialog /></DialogLayer>
    </Page>
  );
}
